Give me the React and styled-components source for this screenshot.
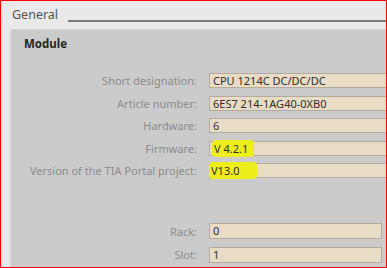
import React from "react";
import styled, { createGlobalStyle } from "styled-components";

const Global = createGlobalStyle`
  html, body { margin: 0; padding: 0; background: #e9e9e9; }
  * { box-sizing: border-box; }
`;

const Frame = styled.div`
  width: 387px;
  height: 268px;
  border: 1px solid #ff0000;
  background: #e9e9e9;
  overflow: hidden;
  font-family: "Noto Sans", "Open Sans", sans-serif;
  display: flex;
  flex-direction: column;
`;

const SectionHeader = styled.div`
  display: flex;
  align-items: center;
  height: 28px;
  padding: 0 0 0 11px;
  gap: 10px;
`;

const SectionTitle = styled.span`
  font-size: 12.5px;
  color: #555;
  line-height: 1;
  margin-top: 1px;
`;

const Rule = styled.div`
  flex: 1;
  height: 2px;
  margin-top: 12px;
  background: #7c7c7c;
`;

const Panel = styled.div`
  flex: 1;
  margin-left: 9px;
  background: #cbcbcb;
  border-left: 1px solid #d9d9d9;
  border-top: 1px solid #d4d4d4;
  padding: 7px 0 0 0;
  display: flex;
  flex-direction: column;
`;

const PanelTitle = styled.div`
  font-size: 11.5px;
  font-weight: 700;
  color: #262626;
  padding-left: 13px;
  height: 36px;
  line-height: 14px;
`;

const Form = styled.div`
  display: grid;
  grid-template-columns: 186px auto;
  column-gap: 12px;
  row-gap: 7.5px;
  align-items: center;
`;

const Label = styled.div`
  font-size: 11px;
  color: #8c8c8c;
  text-align: right;
  white-space: nowrap;
  line-height: 15px;
`;

const Field = styled.div`
  height: ${(p) => (p.$tall ? 16 : 15)}px;
  width: ${(p) => (p.$short ? 173 : 260)}px;
  background: #e9dcc5;
  border: 1px solid #b3ab9f;
  font-size: 11px;
  color: #2e2e2e;
  padding-left: 3px;
  line-height: 13px;
  white-space: nowrap;
`;

const Marker = styled.span`
  display: inline-block;
  background: #eded1c;
  border-radius: 4px;
  line-height: 13px;
  padding: 2px ${(p) => p.$pr || 6}px 2px 2px;
  margin-top: -2px;
  margin-left: ${(p) => p.$ml || -1}px;
`;

const Spacer = styled.div`
  grid-column: 1 / span 2;
  height: 30px;
`;

export default function App() {
  return (
    <>
      <Global />
      <Frame>
        <SectionHeader>
          <SectionTitle>General</SectionTitle>
          <Rule />
        </SectionHeader>
        <Panel>
          <PanelTitle>Module</PanelTitle>
          <Form>
            <Label>Short designation:</Label>
            <Field>CPU 1214C DC/DC/DC</Field>
            <Label>Article number:</Label>
            <Field>6ES7 214-1AG40-0XB0</Field>
            <Label>Hardware:</Label>
            <Field>6</Field>
            <Label>Firmware:</Label>
            <Field>
              <Marker>V 4.2.1</Marker>
            </Field>
            <Label>Version of the TIA Portal project:</Label>
            <Field>
              <Marker $ml={-4} $pr={18}>V13.0</Marker>
            </Field>
            <Spacer />
            <Label>Rack:</Label>
            <Field $short $tall>0</Field>
            <Label>Slot:</Label>
            <Field $short $tall>1</Field>
          </Form>
        </Panel>
      </Frame>
    </>
  );
}
